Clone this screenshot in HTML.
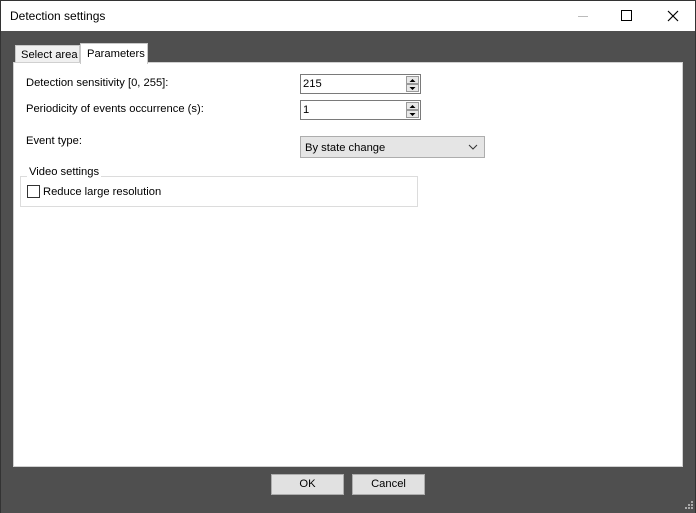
<!DOCTYPE html>
<html><head><meta charset="utf-8"><style>
*{box-sizing:border-box;margin:0;padding:0}
body{width:696px;height:513px;overflow:hidden;background:#4f4f4f;font-family:"Liberation Sans",sans-serif;font-size:11.2px;color:#000;position:relative}
.abs{position:absolute;white-space:nowrap}
#title{left:0;top:0;width:696px;height:31px;background:#fff;border:1px solid #333;border-bottom:none}
#title span{position:absolute;left:9px;top:8px;font-size:12px}
.tab{background:#f0f0f0;border:1px solid #c8c8c8;border-bottom:none}
#panel{left:13px;top:62px;width:670px;height:405px;background:#fff;border:1px solid #d0d0d0}
.spin{background:#fff;border:1px solid #7a7a7a;height:20px}
.spin span{position:absolute;left:2px;top:3px}
.sb{position:absolute;right:1px;width:13px;height:8px;background:#e8e8e8;border:1px solid #9a9a9a}
.btn{background:#e1e1e1;border:1px solid #adadad;height:21px;text-align:center;line-height:19px}
</style></head><body>
<div id="title" class="abs"><span>Detection settings</span>
<div class="abs" style="left:577px;top:15px;width:10px;height:1px;background:#bbb"></div>
<div class="abs" style="left:620px;top:9px;width:11px;height:11px;border:1px solid #000"></div>
<svg class="abs" style="left:666px;top:9px" width="12" height="12"><path d="M1 1L11 11M11 1L1 11" stroke="#000" stroke-width="1.2"/></svg>
</div>
<div class="abs" style="left:695px;top:31px;width:1px;height:482px;background:#333"></div>
<div class="abs" style="left:0;top:31px;width:1px;height:482px;background:#333"></div>
<div class="abs tab" style="left:15px;top:45px;width:65px;height:18px"><span class="abs" style="left:5px;top:3px">Select area</span></div>
<div id="panel" class="abs">
<div class="abs" style="left:12px;top:14px">Detection sensitivity [0, 255]:</div>
<div class="abs" style="left:12px;top:40px">Periodicity of events occurrence (s):</div>
<div class="abs" style="left:12px;top:72px">Event type:</div>
<div class="abs spin" style="left:286px;top:11px;width:121px"><span>215</span>
<div class="sb" style="top:1px"></div><div class="sb" style="top:9px"></div>
<svg class="abs" style="right:3px;top:2px" width="9" height="15"><path d="M1.5 5L4.5 2L7.5 5Z M1.5 10L4.5 13L7.5 10Z" fill="#000"/></svg></div>
<div class="abs spin" style="left:286px;top:37px;width:121px"><span>1</span>
<div class="sb" style="top:1px"></div><div class="sb" style="top:9px"></div>
<svg class="abs" style="right:3px;top:2px" width="9" height="15"><path d="M1.5 5L4.5 2L7.5 5Z M1.5 10L4.5 13L7.5 10Z" fill="#000"/></svg></div>
<div class="abs" style="left:286px;top:73px;width:185px;height:22px;background:#e5e5e5;border:1px solid #adadad"><span class="abs" style="left:4px;top:5px">By state change</span>
<svg class="abs" style="right:6px;top:7px" width="10" height="7"><path d="M1 1L5 5L9 1" stroke="#333" fill="none"/></svg></div>
<div class="abs" style="left:6px;top:113px;width:398px;height:31px;border:1px solid #dcdcdc"></div>
<div class="abs" style="left:13px;top:103px;background:#fff;padding:0 2px">Video settings</div>
<div class="abs" style="left:13px;top:122px;width:13px;height:13px;border:1px solid #333;background:#fff"></div>
<div class="abs" style="left:29px;top:123px">Reduce large resolution</div>
</div>
<div class="abs tab" style="left:80px;top:43px;width:68px;height:21px;background:#fff"><span class="abs" style="left:6px;top:4px">Parameters</span></div>
<div class="abs btn" style="left:271px;top:474px;width:73px">OK</div>
<div class="abs btn" style="left:352px;top:474px;width:73px">Cancel</div>
<svg class="abs" style="left:684px;top:500px" width="10" height="10"><g fill="#aaa"><rect x="7" y="1" width="2" height="2"/><rect x="4" y="4" width="2" height="2"/><rect x="7" y="4" width="2" height="2"/><rect x="1" y="7" width="2" height="2"/><rect x="4" y="7" width="2" height="2"/><rect x="7" y="7" width="2" height="2"/></g></svg>
</body></html>
